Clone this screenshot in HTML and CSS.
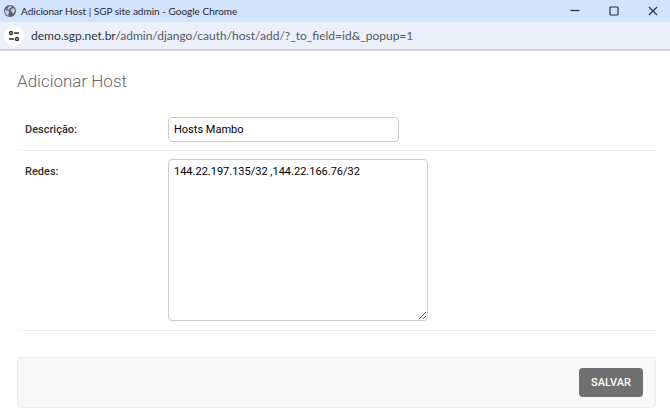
FILE: index.html
```html
<!DOCTYPE html>
<html lang="pt-br">
<head>
    <meta charset="UTF-8">
    <meta name="viewport" content="width=device-width, initial-scale=1.0">
    <title>Adicionar Host | SGP site admin</title>
    <link rel="stylesheet" href="styles.css">
</head>
<body>
    <header>
        <div class="titlebar">
            <svg class="globe" viewBox="0 0 12 12">
                <circle cx="6" cy="6" r="6" fill="#5b6269"/>
                <path d="M1.2 4.5 3 5.6l1.8.5.5 1.4-1 1.1.2 2.1C2.300 10.200 1 8.300 1 6zM5 1.200l2.600.1-.4 1.500-1.500.5-.3 1.100-1.700.3L3.200 3.500zM8.500 3.300l1.700.200.700 2.100-1 2.700-1.300.200-.4-1.700-1.500-.5.300-1.700z" fill="#c3d0e4"/>
            </svg>
            <span class="title">Adicionar Host | SGP site admin - Google Chrome</span>
            <div class="controls">
                <button type="button" aria-label="Minimizar"><svg viewBox="0 0 10 10"><path d="M.5 4.500h9"/></svg></button>
                <button type="button" aria-label="Maximizar"><svg viewBox="0 0 10 10"><rect x="1" y="1" width="8" height="8" rx="1"/></svg></button>
                <button type="button" aria-label="Fechar"><svg viewBox="0 0 10 10"><path d="M1 1l8 8M9 1L1 9"/></svg></button>
            </div>
        </div>
        <div class="address">
            <button type="button" class="site-info" aria-label="Informações do site">
                <svg viewBox="0 0 12 12"><circle cx="3" cy="3" r="1.500"/><path d="M6 3h5M1 9h5"/><circle cx="9" cy="9" r="1.500"/></svg>
            </button>
            <span class="url"><b>demo.sgp.net.br</b>/admin/django/cauth/host/add/?_to_field=id&amp;_popup=1</span>
        </div>
    </header>
    <main>
        <h1>Adicionar Host</h1>
        <form>
            <div class="row">
                <label for="descricao">Descrição:</label>
                <input type="text" id="descricao" value="Hosts Mambo">
            </div>
            <div class="row">
                <label for="redes">Redes:</label>
                <textarea id="redes" spellcheck="false">144.22.197.135/32 ,144.22.166.76/32</textarea>
            </div>
            <div class="submit-row">
                <button type="submit" class="save">SALVAR</button>
            </div>
        </form>
    </main>
</body>
</html>
```
FILE: styles.css
```css
*{
    box-sizing: border-box;
}
body{
    margin: 0;
    background-color: #fff;
    color: #333;
    font-family: Roboto, "Liberation Sans", sans-serif;
    font-size: 11px;
}
header{
    font-family: Lato, "Open Sans", sans-serif;
    background-color: #ebf0fa;
    border-bottom: 2px solid #cdd0d6;
}
.titlebar{
    display: flex;
    align-items: center;
    height: 22px;
    padding-left: 4px;
    background-color: #d3e2fd;
    color: #1f2633;
}
.globe{
    width: 12px;
    height: 12px;
    margin-right: 5px;
}
.title{
    font-size: 10px;
    line-height: 18px;
    white-space: nowrap;
}
.controls{
    display: flex;
    gap: 5px;
    margin-left: auto;
}
.controls button{
    display: flex;
    align-items: center;
    justify-content: center;
    width: 34px;
    height: 20px;
    padding: 0;
    border: 0;
    background: none;
}
.controls svg{
    width: 10px;
    height: 10px;
    fill: none;
    stroke: #26303d;
    stroke-width: 1.2;
}
.address{
    display: flex;
    align-items: center;
    height: 27px;
    padding: 0 4px;
}
.site-info{
    display: flex;
    align-items: center;
    justify-content: center;
    width: 20px;
    height: 20px;
    margin-right: 7px;
    padding: 0;
    border: 0;
    border-radius: 50%;
    background-color: #fff;
}
.site-info svg{
    width: 12px;
    height: 12px;
    fill: none;
    stroke: #333;
    stroke-width: 1.4;
}
.url{
    font-size: 12px;
    line-height: 20px;
    color: #55595f;
    white-space: nowrap;
}
.url b{
    font-weight: normal;
    color: #30343a;
}
main{
    padding: 20px 14px 6px 17px;
}
h1{
    margin: 0 0 18px;
    font-size: 17px;
    font-weight: 300;
    line-height: 20px;
    color: #666;
}
.row{
    display: flex;
    align-items: flex-start;
    padding: 8px 8px 9px;
    border-bottom: 1px solid #eee;
}
.row:first-child{
    padding-bottom: 8px;
}
label{
    width: 143px;
    font-weight: 500;
    line-height: 25px;
}
input, textarea{
    padding: 5px;
    border: 1px solid #ccc;
    border-radius: 4px;
    background-color: #fff;
    color: #000;
    font-family: inherit;
    font-size: 11px;
    line-height: 14px;
}
input{
    width: 231px;
    height: 25px;
}
textarea{
    width: 260px;
    height: 162px;
}
.submit-row{
    display: flex;
    justify-content: flex-end;
    margin-top: 26px;
    padding: 10px 12px;
    border: 1px solid #eee;
    border-radius: 4px;
    background-color: #f8f8f8;
}
.save{
    width: 64px;
    height: 29px;
    padding: 0;
    border: 0;
    border-radius: 4px;
    background-color: #707070;
    color: #fff;
    font-family: inherit;
    font-size: 11px;
    font-weight: 500;
}
```
